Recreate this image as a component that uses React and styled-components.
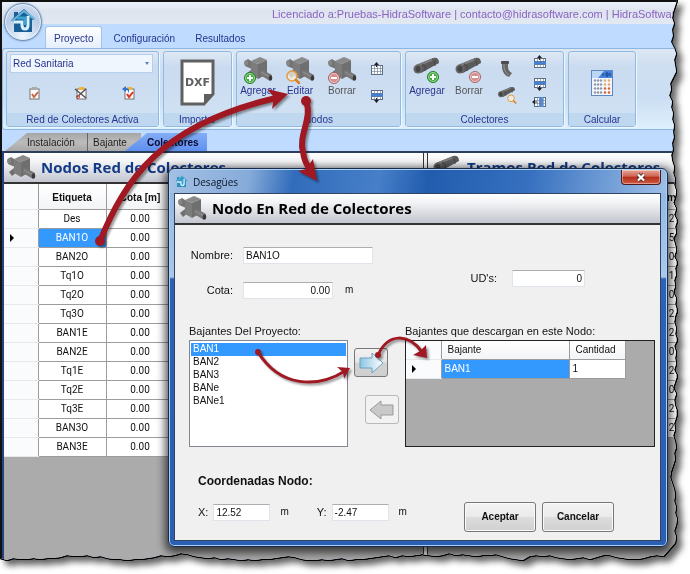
import React from 'react';
import styled, { createGlobalStyle, css } from 'styled-components';

const sans = '"Liberation Sans", Arial, sans-serif';
const heading = '"Open Sans", "Noto Sans", sans-serif';
const grid = 'Roboto, "Liberation Sans", sans-serif';

const GlobalStyle = createGlobalStyle`
  * {
    box-sizing: border-box;
  }

  body {
    margin: 0;
    background: #fff;
    font: 10px/12px ${sans};
    color: #111;
  }

  button, input, select {
    font: inherit;
    color: inherit;
    margin: 0;
  }
`;

/* Torn paper edge: insets from the right side and from the bottom side */
const rightTear = [
  0, 2, 4, 5, 3, 5, 4, 6, 3, 1, 3, 2, 1, 4, 7, 6, 8, 5, 6, 4, 5, 3, 4, 3, 5, 4,
  6, 5, 3, 4, 2, 3, 1, 2, 4, 1, 3, 0, 2, 1, 4, 2, 1, 3, 0, 2, 1, 3, 2, 4, 1, 2,
  0, 2, 3, 1, 2, 0, 3, 1, 2, 1, 3, 0, 2, 4, 1, 3, 2, 0, 1, 3, 2, 4, 2, 1, 3, 2,
  4, 6, 7, 5, 3, 2, 3, 1, 2, 0, 1, 3, 1, 2,
];
const bottomTear = [
  2, 0, 2, 1, 1, 2, 1, 2, 2, 3, 5, 4, 4, 5, 3, 4, 2, 1, 1, 0, 1, 1, 2, 3, 5, 4,
  5, 7, 6, 4, 3, 2, 3, 1, 2, 1, 0, 1, 0, 1, 1, 2, 3, 4, 3, 1, 0, 0, 1, 0, 1, 2,
  0, 1, 1, 2, 3, 4, 5, 3, 5, 4, 5, 6, 5, 4, 5, 7, 5, 6, 5, 4, 5, 5, 6, 4, 2, 1,
  0, 4, 5, 4, 5, 3, 2, 1, 2, 3, 1, 3, 5, 5, 3, 2, 1, 1, 2, 4, 5, 4,
];

const tornShape = [
  '0 0',
  ...rightTear.map(
    (inset, i) => `calc(100% - ${inset}px) ${(i * 98) / rightTear.length}%`
  ),
  ...bottomTear
    .map((inset, i) => `${(i * 99) / bottomTear.length}% calc(100% - ${inset}px)`)
    .reverse(),
].join(', ');

const Page = styled.div`
  position: relative;
  display: flex;
  min-height: 100vh;
  padding: 0 13px 14px 0;
  filter: drop-shadow(1px 0 0 #000) drop-shadow(0 1px 0 #000)
    drop-shadow(5px 5px 3px rgba(0, 0, 0, 0.6));
`;

const AppWindow = styled.main`
  position: relative;
  display: flex;
  flex: 1;
  flex-direction: column;
  min-width: 0;
  border-top: 2px solid #111;
  border-left: 2px solid #111;
  background: #bfdbff;
  clip-path: polygon(${tornShape});
`;

/* ---------- title and ribbon ---------- */

const TitleBar = styled.header`
  display: flex;
  align-items: center;
  height: 22px;
  padding-left: 270px;
  background: linear-gradient(#eaf1fa, #dde4ee 40%, #e3e9f2);
  color: #8a62c4;
  font-size: 11px;
  white-space: nowrap;
`;

const TitleText = styled.span`
  flex: 1;
  padding-top: 1px;
`;

const Orb = styled.button`
  position: absolute;
  top: 1px;
  left: 2px;
  width: 38px;
  height: 38px;
  padding: 0;
  border: 1px solid #6f8fb8;
  border-radius: 50%;
  background: radial-gradient(circle at 50% 90%, #eef7ff, #b8cce6 55%, #d5e2f2);
  box-shadow: inset 0 0 0 1px #e9f2fc, 0 0 2px #5f7fa8;
`;

const RibbonTabs = styled.nav`
  display: flex;
  align-items: flex-end;
  height: 24px;
  padding-left: 43px;
`;

const RibbonTab = styled.a`
  height: 22px;
  margin-right: 2px;
  padding: 6px 8px 0;
  border: 1px solid transparent;
  border-bottom: 0;
  border-radius: 3px 3px 0 0;
  color: #26348f;
  text-decoration: none;

  ${({ $active }) =>
    $active &&
    css`
      border-color: #9dc3ee;
      background: linear-gradient(#fff, #e5eefb);
    `}
`;

const Ribbon = styled.section`
  display: flex;
  gap: 4px;
  height: 82px;
  padding: 2px 3px;
  border: 1px solid #8db5e2;
  border-right: 0;
  border-radius: 3px 0 0 3px;
  background: linear-gradient(#dee8f5, #cfdff1 20%, #cbdef3 60%, #def0fd);
`;

const Group = styled.section`
  display: flex;
  flex: 0 0 ${({ $width }) => $width}px;
  flex-direction: column;
  border: 1px solid #90badf;
  border-radius: 3px;
  background: linear-gradient(#dfe8f4, #cadbf0 20%, #d2e2f4);
  box-shadow: 1px 1px 0 #eef6ff;
`;

const GroupBody = styled.div`
  display: flex;
  flex: 1;
  justify-content: ${({ $center }) => ($center ? 'center' : 'flex-start')};
  align-items: ${({ $center }) => ($center ? 'center' : 'stretch')};
`;

const GroupName = styled.h2`
  height: 13px;
  margin: 0;
  background: #bfd8f0;
  color: #26348f;
  font-size: 10px;
  font-weight: 400;
  line-height: 13px;
  text-align: center;
`;

const NetworkTools = styled.div`
  display: flex;
  flex: 1;
  flex-direction: column;
  padding: 2px 5px 0 3px;
`;

const NetworkSelect = styled.div`
  position: relative;

  select {
    width: 100%;
    height: 19px;
    padding: 0 2px;
    border: 1px solid #b7cfee;
    border-radius: 0;
    background: #f0f6fe;
    color: #26348f;
    appearance: none;
  }

  &::after {
    content: '';
    position: absolute;
    top: 8px;
    right: 4px;
    border: 2px solid transparent;
    border-top: 3px solid #5b7fb8;
    pointer-events: none;
  }
`;

const IconRow = styled.div`
  display: flex;
  flex: 1;
  justify-content: space-around;
  align-items: center;
`;

const ToolButton = styled.button`
  display: flex;
  flex-direction: column;
  align-items: center;
  justify-content: center;
  padding: 0;
  border: 0;
  background: none;
`;

const BigButton = styled(ToolButton)`
  justify-content: flex-start;
  width: 42px;
  padding-top: 3px;
  color: ${({ $muted }) => ($muted ? '#555' : '#26348f')};
`;

const ToolStack = styled.div`
  display: flex;
  flex-direction: column;
  justify-content: space-evenly;
  align-items: center;
  width: ${({ $width }) => $width || 33}px;
`;

/* ---------- document area ---------- */

const DocTabs = styled.nav`
  display: flex;
  align-items: flex-end;
  height: 21px;
  padding-left: 3px;
`;

const DocTab = styled.a`
  height: 18px;
  padding: 4px 0 0 ${({ $pad }) => $pad}px;
  width: ${({ $width }) => $width}px;
  background: linear-gradient(#a5a5a5, #bcbcbc 50%, #a8a8a8);
  color: #222;
  text-decoration: none;

  ${({ $slanted }) =>
    $slanted &&
    css`
      clip-path: polygon(22px 0, 100% 0, 100% 100%, 0 100%);
    `}

  ${({ $divider }) =>
    $divider &&
    css`
      border-left: 1px solid #666;
    `}

  ${({ $active }) =>
    $active &&
    css`
      margin-left: -16px;
      background: linear-gradient(#84adf5, #5f90ef);
      color: #0a0a30;
      font-weight: 700;
    `}
`;

const Workspace = styled.div`
  display: grid;
  flex: 1;
  grid-template-columns: minmax(0, 1fr) 5px 249px;
  border-top: 2px solid #2d3e5c;
  border-left: 2px solid #24427f;
  background: #ababab;
`;

const Splitter = styled.div`
  border: solid #333;
  border-width: 0 1px;
  background: #f4f4f4;
`;

const Panel = styled.section`
  min-width: 0;
  overflow: hidden;
`;

const Banner = styled.header`
  display: flex;
  align-items: center;
  gap: 5px;
  height: 31px;
  padding-left: ${({ $indent }) => $indent || 2}px;
  border-bottom: 2px solid #333;
  background: linear-gradient(#fff, #f2f3f5 30%, #c3c6d0);
  color: ${({ $color }) => $color || '#000'};

  h1 {
    margin: 0;
    padding-bottom: 2px;
    font: 700 15px/22px ${heading};
    white-space: nowrap;
  }
`;

const DataTable = styled.table`
  width: ${({ $width }) => $width || 'auto'};
  border-collapse: collapse;
  table-layout: fixed;
  background: #fff;
  font-family: ${grid};
  text-align: center;

  th,
  td {
    height: 19px;
    padding: 0;
    border: 1px solid #9c9c9c;
    border-width: 0 1px 1px 0;
    overflow: hidden;
  }

  thead th {
    height: 25px;
    padding-top: 3px;
    font-family: ${sans};
    background: linear-gradient(#fff, #f3f4f6);
  }

  th:first-child {
    border-bottom-color: #e6e8ec;
    background: #fafbfd;
  }
`;

const SelectedCell = styled.td`
  background: #3399ff;
  color: #fff;
`;

const RowMarker = styled.span`
  display: block;
  width: 0;
  margin-left: ${({ $inset }) => $inset}px;
  border: 4px solid transparent;
  border-left-color: #000;
  border-right-width: 0;
`;

/* ---------- dialog ---------- */

const Dialog = styled.form`
  position: absolute;
  top: 166px;
  left: 166px;
  right: 9px;
  padding: 0 6px 5px 5px;
  border: 1px solid #1b2c4a;
  border-radius: 6px;
  background: linear-gradient(#8fb4e2, #a9c8ee 108px, #2c63b7 110px, #2a5fb3);
  box-shadow: inset 0 0 0 1px #a9d0f5, 0 3px 9px 3px rgba(0, 0, 0, 0.65);
`;

const DialogTitle = styled.header`
  display: flex;
  align-items: center;
  gap: 5px;
  height: 23px;
  margin: 1px -5px 0 -4px;
  padding-left: 5px;
  border-radius: 5px 5px 0 0;
  background: linear-gradient(
    100deg,
    #a3c0e4,
    #86abd9 16%,
    #316cbb 25%,
    #477fc8 42%,
    #215cae 52%,
    #3670bf 72%,
    #9dbfe8
  );
  color: #0a1526;
  font: 10px/14px ${heading};
`;

const CloseButton = styled.button`
  align-self: flex-start;
  display: flex;
  align-items: center;
  justify-content: center;
  width: 40px;
  height: 15px;
  margin: 0 5px 0 auto;
  padding: 0;
  border: 1px solid #4d1a1a;
  border-top: 0;
  border-radius: 0 0 4px 4px;
  background: linear-gradient(#e2a699, #cf6452 45%, #b32c18 50%, #cf5a42);
  box-shadow: inset 0 0 0 1px rgba(255, 255, 255, 0.4);
`;

const Client = styled.div`
  border: 1px solid #31435f;
  background: #f0f0f0;
`;

const DialogBody = styled.div`
  padding: 21px 5px 8px 14px;
`;

const Columns = styled.div`
  display: flex;
  justify-content: space-between;
`;

const Fields = styled.div`
  display: grid;
  grid-template-columns: 44px auto;
  gap: 17px 10px;
`;

const Field = styled.div`
  display: flex;
  align-items: center;
  gap: 12px;
`;

const UnitsField = styled(Field)`
  align-self: flex-end;
  gap: 15px;
  margin: 0 70px 12px 0;
`;

const Label = styled.label`
  font-size: 11px;
  line-height: 18px;
  white-space: nowrap;
  text-align: ${({ $end }) => ($end ? 'right' : 'left')};
`;

const TextBox = styled.input`
  width: ${({ $width }) => $width}px;
  height: 17px;
  padding: 0 2px;
  border: 1px solid #dfe4ea;
  border-top-color: #abadb3;
  background: #fff;
  text-align: ${({ $end }) => ($end ? 'right' : 'left')};
`;

const Transfer = styled.div`
  display: grid;
  grid-template-columns: 159px 57px minmax(0, 1fr);
  margin-top: 23px;
`;

const ListBox = styled.select`
  display: block;
  width: 100%;
  height: 107px;
  padding: 2px 1px;
  border: 1px solid #828790;
  border-radius: 0;
  background: #fff;
  outline: 0;
  overflow: hidden;

  option {
    min-height: 13px;
    padding: 0 2px;
    line-height: 13px;
  }

  option:checked {
    background: linear-gradient(#3399ff, #3399ff);
    -webkit-text-fill-color: #fff;
  }
`;

const Arrows = styled.div`
  display: flex;
  flex-direction: column;
  gap: 18px;
  padding: 26px 6px 0;
`;

const ArrowButton = styled.button`
  display: flex;
  align-items: center;
  justify-content: center;
  align-self: ${({ $end }) => ($end ? 'flex-end' : 'flex-start')};
  width: 34px;
  height: 29px;
  padding: 0;
  border: 1px solid ${({ $end }) => ($end ? '#b9b9b9' : '#777')};
  border-radius: 3px;
  background: ${({ $end }) =>
    $end ? '#f2f2f2' : 'linear-gradient(#f2f2f2, #e6e6e6 48%, #d2d2d2 52%, #cfcfcf)'};
`;

const GridFrame = styled.div`
  height: 107px;
  border: 1px solid #222;
  background: #ababab;
`;

const InnerTable = styled(DataTable)`
  font-family: ${sans};
  text-align: left;

  th,
  td {
    padding-left: 3px;
  }

  thead th {
    height: 18px;
    padding: 0 0 0 6px;
    font-weight: 400;
  }

  tbody th {
    padding-left: 0;
  }
`;

const Footer = styled.div`
  display: flex;
  justify-content: space-between;
  padding: 27px 41px 0 9px;
`;

const Coordinates = styled.fieldset`
  margin: 0;
  padding: 0 0 11px;
  border: 0;

  legend {
    padding: 0;
    margin-bottom: 15px;
    font-size: 12px;
    font-weight: 700;
    line-height: 14px;
  }
`;

const CoordinateRow = styled.div`
  display: flex;
  gap: 28px;
`;

const Coordinate = styled(Field)`
  gap: 5px;

  span {
    padding-left: 5px;
  }
`;

const Actions = styled.div`
  display: flex;
  align-items: flex-end;
  gap: 6px;
`;

const ActionButton = styled.button`
  width: 72px;
  height: 30px;
  padding: 0;
  border: 1px solid #777;
  border-radius: 3px;
  background: linear-gradient(#f3f3f3, #ebebeb 48%, #dcdcdc 52%, #d0d0d0);
  box-shadow: inset 0 0 0 1px #fafafa;
  font-weight: 700;
`;

const Callouts = styled.svg`
  position: absolute;
  top: 0;
  left: 0;
  pointer-events: none;
  filter: drop-shadow(2px 2px 1px rgba(0, 0, 0, 0.4));
`;

/* ---------- icons ---------- */

const HouseIcon = ({ size = 26, plain }) => (
  <svg width={size} height={size} viewBox="0 0 26 26">
    <path
      d="M1 13 L4 9 V4 H8 V6 L14 1 L25 11 L22 12 V24 H4 V13 Z"
      fill={plain ? '#2d8fc0' : '#1a5f96'}
    />
    <path d="M2 13 L14 3 L24 11" fill="none" stroke="#69b9de" strokeWidth="2" />
    <path
      d="M4 14 H12 V17 Q12 21 15 21 Q18 21 18 17 V8"
      fill="none"
      stroke="#d9f1fb"
      strokeWidth="3"
    />
    <path d="M7 10 H15 V17" fill="none" stroke="#3fa3cf" strokeWidth="3" />
  </svg>
);

const Badge = ({ kind, x, y }) => {
  if (kind === 'find') {
    return (
      <g transform={`translate(${x} ${y - 2})`} fill="none">
        <circle r="5" fill="#f6efe0" fillOpacity=".75" stroke="#e79b3a" strokeWidth="1.5" />
        <path d="M4 4 L7 7" stroke="#d98324" strokeWidth="2.5" strokeLinecap="round" />
      </g>
    );
  }
  const add = kind === 'add';
  return (
    <g transform={`translate(${x} ${y})`}>
      <circle r="5.5" fill={add ? '#3fae3a' : '#d49090'} stroke={add ? '#237e25' : '#a86464'} />
      <circle r="4.5" fill="none" stroke="#fff" strokeOpacity=".5" />
      <path d={add ? 'M-3 0 H3 M0 -3 V3' : 'M-3 0 H3'} stroke="#fff" strokeWidth="2" />
    </g>
  );
};

const NodeIcon = ({ badge, size = 30 }) => (
  <svg width={size} height={size} viewBox="0 0 30 30">
    <path d="M2 6 L5 4 L11 8 V14 L9 14 L2 11 Z" fill="#747474" />
    <ellipse cx="3" cy="8" rx="2" ry="2.800" fill="#868686" />
    <path d="M3 19 L8 15 L11 19 L6 23 Z" fill="#707070" />
    <path d="M8 6 L17 2 L24 5 L15 9 Z" fill="#8a8a8a" />
    <path d="M8 6 L15 9 V24 L8 20 Z" fill="#7c7c7c" />
    <path d="M15 9 L24 5 V19 L15 24 Z" fill="#6f6f6f" />
    <path d="M17 16 L20 15 L29 20 L27 26 L17 20 Z" fill="#777" />
    <path d="M18 17 L27 22" stroke="#949494" />
    <ellipse cx="27.500" cy="23" rx="1.800" ry="2.800" fill="#3a3a3a" />
    {badge && <Badge kind={badge} x={7} y={23} />}
  </svg>
);

const PipeIcon = ({ badge, size = 30 }) => (
  <svg width={size} height={size} viewBox="0 0 30 30">
    <path d="M4 10 L21 3 Q27 2 27 8 L9 18 Z" fill="#5a5a5a" />
    <path d="M7 10 L22 4" stroke="#7d7d7d" strokeWidth="2" />
    <path d="M10 9 Q14 10 13 16 M20 4 Q23 5 23 11" stroke="#454545" fill="none" />
    <ellipse cx="6" cy="14" rx="4.500" ry="4.500" fill="#666" />
    <ellipse cx="6" cy="14" rx="2.500" ry="3" fill="#454545" />
    {badge && <Badge kind={badge} x={21} y={22} />}
  </svg>
);

const ElbowIcon = () => (
  <svg width="16" height="18" viewBox="0 0 16 18">
    <path d="M3 2 V8 Q4 15 10 17 L13 13 Q9 11 9 7 V2 Z" fill="#666" />
    <path d="M5 4 V8 Q6 13 10 15" fill="none" stroke="#949494" />
    <rect x="2" y="1" width="8" height="3" rx="1" fill="#4b4b4b" />
  </svg>
);

const DxfIcon = () => (
  <svg width="36" height="48" viewBox="0 0 36 48" role="img" aria-label="DXF">
    <path d="M2 2 H33 V35 L24 45 H2 Z" fill="#fff" stroke="#606060" strokeWidth="3" />
    <path d="M24 46 V35 H34 Z" fill="#606060" />
    <text
      x="17.500"
      y="27"
      textAnchor="middle"
      fontFamily="DejaVu Sans, sans-serif"
      fontWeight="700"
      fontSize="11"
      fill="#606060"
    >
      DXF
    </text>
  </svg>
);

const ClipIcon = ({ variant }) => (
  <svg width="14" height="14" viewBox="0 0 14 14">
    <rect x="3" y="3" width="9" height="10" fill="#fbfbfb" stroke="#77716a" />
    <rect x="5" y="1" width="5" height="3" fill={variant ? '#f0b437' : '#aaa'} />
    {variant === 'cut' ? (
      <path d="M1 3 L12 12 M3 11 L12 3" stroke="#555" strokeWidth="1.500" />
    ) : (
      <path
        d="M5 8 L7 11 L11 6"
        fill="none"
        stroke={variant ? '#e0321d' : '#c66a4d'}
        strokeWidth="2"
      />
    )}
    {variant === 'cut' && <circle cx="4" cy="11" r="1.500" fill="none" stroke="#c2493a" />}
    {variant === 'undo' && (
      <path d="M4 0 L0 3 L4 6 V4 Q7 4 6 8 Q9 2 4 2 Z" fill="#2b71d6" />
    )}
  </svg>
);

const rowIconArrows = {
  up: 'M7.500 0 L10 3 H8 V5 H7 V3 H5 Z',
  down: 'M7.500 16 L10 13 H8 V11 H7 V13 H5 Z',
  left: 'M0 8 L3 5.500 V7.500 H5 V8.500 H3 V10.500 Z',
};

const RowIcon = ({ to, band }) => (
  <svg width="15" height="16" viewBox="0 0 15 16">
    <rect x="2.500" y="3.500" width="11" height="9" fill="#fff" stroke="#5b6b84" />
    {band === 'row' && <rect x="2" y="6" width="12" height="4" fill="#3d83e6" />}
    {band === 'column' && <rect x="7" y="3" width="4" height="10" fill="#4f91ea" />}
    <path d="M2 6.500 H14 M2 9.500 H14 M5.500 3 V13 M8.500 3 V13 M11.500 3 V13" stroke="#68788f" strokeWidth=".6" />
    <path d={rowIconArrows[to]} fill="#222" />
  </svg>
);

const CalculatorIcon = () => (
  <svg width="22" height="26" viewBox="0 0 22 26">
    <rect x=".5" y=".5" width="21" height="25" fill="#f2f6fc" stroke="#6088c4" />
    <rect x="1" y="1" width="20" height="7" fill="#4583dc" />
    <path d="M1 1 H13 L7 8 H1 Z" fill="#bcd6f8" />
    <path d="M12 6 V3 M15 3 H17 V6 H15 Z M19 3 V6" stroke="#163f86" fill="none" />
    {[11, 15, 19, 23].map(y =>
      [4, 7, 10, 14, 18].map(x => (
        <circle key={`${x}-${y}`} cx={x} cy={y - 0.5} r="1.200" fill={x > 12 ? (y > 15 ? '#d9622b' : '#eda764') : '#8d99aa'} />
      ))
    )}
  </svg>
);

const ArrowIcon = ({ back }) => (
  <svg width="26" height="22" viewBox="0 0 26 22">
    <defs>
      <linearGradient id="water" x2="1">
        <stop stopColor="#8cc6e4" />
        <stop offset="1" stopColor="#fff" />
      </linearGradient>
    </defs>
    <path
      d={back ? 'M1 11 L12 2 V6 H24 V16 H12 V20 Z' : 'M25 11 L14 1 V6 H2 V16 H14 V21 Z'}
      fill={back ? '#c9c9c9' : 'url(#water)'}
      stroke={back ? '#999' : '#6ba0bf'}
    />
  </svg>
);

/* ---------- data ---------- */

const nodes = [
  'Des', 'BAN1O', 'BAN2O', 'Tq1O', 'Tq2O', 'Tq3O', 'BAN1E',
  'BAN2E', 'Tq1E', 'Tq2E', 'Tq3E', 'BAN3O', 'BAN3E',
];

const lengths = [2, 5, 0, 1, 0, 2, 2, 0, 2, 0, 2, 2];

const stacks = ['BAN1', 'BAN2', 'BAN3', 'BANe', 'BANe1'];

/* ---------- sections ---------- */

const RibbonBar = () => (
  <Ribbon>
    <Group $width={153}>
      <NetworkTools>
        <NetworkSelect>
          <select aria-label="Red activa">
            <option>Red Sanitaria</option>
          </select>
        </NetworkSelect>
        <IconRow>
          <ToolButton type="button" aria-label="Validar"><ClipIcon /></ToolButton>
          <ToolButton type="button" aria-label="Quitar"><ClipIcon variant="cut" /></ToolButton>
          <ToolButton type="button" aria-label="Restaurar"><ClipIcon variant="undo" /></ToolButton>
        </IconRow>
      </NetworkTools>
      <GroupName>Red de Colectores Activa</GroupName>
    </Group>

    <Group $width={69}>
      <GroupBody $center>
        <ToolButton type="button"><DxfIcon /></ToolButton>
      </GroupBody>
      <GroupName>Importar</GroupName>
    </Group>

    <Group $width={165}>
      <GroupBody>
        <BigButton type="button"><NodeIcon badge="add" />Agregar</BigButton>
        <BigButton type="button"><NodeIcon badge="find" />Editar</BigButton>
        <BigButton type="button" $muted><NodeIcon badge="remove" />Borrar</BigButton>
        <ToolStack $width={27}>
          <ToolButton type="button" aria-label="Fila arriba"><RowIcon to="up" /></ToolButton>
          <ToolButton type="button" aria-label="Fila abajo"><RowIcon to="down" band="row" /></ToolButton>
        </ToolStack>
      </GroupBody>
      <GroupName>Nodos</GroupName>
    </Group>

    <Group $width={159}>
      <GroupBody>
        <BigButton type="button"><PipeIcon badge="add" />Agregar</BigButton>
        <BigButton type="button" $muted><PipeIcon badge="remove" />Borrar</BigButton>
        <ToolStack>
          <ToolButton type="button" aria-label="Codo"><ElbowIcon /></ToolButton>
          <ToolButton type="button" aria-label="Editar tramo"><PipeIcon badge="find" size={20} /></ToolButton>
        </ToolStack>
        <ToolStack>
          <ToolButton type="button" aria-label="Insertar arriba"><RowIcon to="up" band="row" /></ToolButton>
          <ToolButton type="button" aria-label="Insertar abajo"><RowIcon to="down" band="row" /></ToolButton>
          <ToolButton type="button" aria-label="Insertar columna"><RowIcon to="left" band="column" /></ToolButton>
        </ToolStack>
      </GroupBody>
      <GroupName>Colectores</GroupName>
    </Group>

    <Group $width={68}>
      <GroupBody $center>
        <ToolButton type="button" aria-label="Calcular"><CalculatorIcon /></ToolButton>
      </GroupBody>
      <GroupName>Calcular</GroupName>
    </Group>
  </Ribbon>
);

const NodesPanel = () => (
  <Panel>
    <Banner $color="#123a86">
      <NodeIcon />
      <h1>Nodos Red de Colectores</h1>
    </Banner>
    <DataTable $width="170px">
      <colgroup>
        <col width="34" />
        <col width="68" />
        <col width="68" />
      </colgroup>
      <thead>
        <tr>
          <th aria-label="Fila" />
          <th>Etiqueta</th>
          <th>Cota [m]</th>
        </tr>
      </thead>
      <tbody>
        {nodes.map(name => {
          const selected = name === 'BAN1O';
          const Cell = selected ? SelectedCell : 'td';
          return (
            <tr key={name}>
              <th>{selected && <RowMarker $inset={6} />}</th>
              <Cell>{name}</Cell>
              <td>0.00</td>
            </tr>
          );
        })}
      </tbody>
    </DataTable>
  </Panel>
);

const SectionsPanel = () => (
  <Panel>
    <Banner $color="#123a86" $indent={4}>
      <PipeIcon />
      <h1>Tramos Red de Colectores</h1>
    </Banner>
    <DataTable $width="100%">
      <colgroup>
        <col width="34" />
        <col />
        <col width="10" />
      </colgroup>
      <thead>
        <tr>
          <th aria-label="Fila" />
          <th />
          <th>m</th>
        </tr>
      </thead>
      <tbody>
        {lengths.map((length, i) => (
          <tr key={i}>
            <th />
            <td />
            <td>{length}</td>
          </tr>
        ))}
      </tbody>
    </DataTable>
  </Panel>
);

const NodeDialog = () => (
  <Dialog onSubmit={e => e.preventDefault()}>
    <DialogTitle>
      <HouseIcon size={13} plain />
      Desagües
      <CloseButton type="button" aria-label="Cerrar">
        <svg width="10" height="9" viewBox="0 0 10 9">
          <path d="M2 1.500 L8 7.500 M8 1.500 L2 7.500" stroke="#53302c" strokeWidth="4" />
          <path d="M2 1.500 L8 7.500 M8 1.500 L2 7.500" stroke="#fff" strokeWidth="2.200" />
        </svg>
      </CloseButton>
    </DialogTitle>
    <Client>
      <Banner>
        <NodeIcon />
        <h1>Nodo En Red de Colectores</h1>
      </Banner>
      <DialogBody>
        <Columns>
          <Fields>
            <Label htmlFor="nombre" $end>Nombre:</Label>
            <Field>
              <TextBox id="nombre" $width={130} defaultValue="BAN1O" />
            </Field>
            <Label htmlFor="cota" $end>Cota:</Label>
            <Field>
              <TextBox id="cota" $width={90} $end defaultValue="0.00" />
              <span>m</span>
            </Field>
          </Fields>
          <UnitsField>
            <Label htmlFor="uds">UD's:</Label>
            <TextBox id="uds" $width={73} $end defaultValue="0" />
          </UnitsField>
        </Columns>

        <Transfer>
          <div>
            <Label htmlFor="proyecto">Bajantes Del Proyecto:</Label>
            <ListBox id="proyecto" size={8} defaultValue="BAN1">
              {stacks.map(name => (
                <option key={name}>{name}</option>
              ))}
            </ListBox>
          </div>
          <Arrows>
            <ArrowButton type="button" aria-label="Agregar bajante"><ArrowIcon /></ArrowButton>
            <ArrowButton type="button" aria-label="Quitar bajante" $end><ArrowIcon back /></ArrowButton>
          </Arrows>
          <div>
            <Label as="div" id="descargan">Bajantes que descargan en este Nodo:</Label>
            <GridFrame>
              <InnerTable $width="219px" aria-labelledby="descargan">
                <colgroup>
                  <col width="35" />
                  <col width="128" />
                  <col width="56" />
                </colgroup>
                <thead>
                  <tr>
                    <th aria-label="Fila" />
                    <th>Bajante</th>
                    <th>Cantidad</th>
                  </tr>
                </thead>
                <tbody>
                  <tr>
                    <th><RowMarker $inset={6} /></th>
                    <SelectedCell>BAN1</SelectedCell>
                    <td>1</td>
                  </tr>
                </tbody>
              </InnerTable>
            </GridFrame>
          </div>
        </Transfer>

        <Footer>
          <Coordinates>
            <legend>Coordenadas Nodo:</legend>
            <CoordinateRow>
              <Coordinate>
                <Label htmlFor="x">X:</Label>
                <TextBox id="x" $width={57} defaultValue="12.52" />
                <span>m</span>
              </Coordinate>
              <Coordinate>
                <Label htmlFor="y">Y:</Label>
                <TextBox id="y" $width={57} defaultValue="-2.47" />
                <span>m</span>
              </Coordinate>
            </CoordinateRow>
          </Coordinates>
          <Actions>
            <ActionButton type="submit">Aceptar</ActionButton>
            <ActionButton type="button">Cancelar</ActionButton>
          </Actions>
        </Footer>
      </DialogBody>
    </Client>
  </Dialog>
);

const CalloutArrows = () => (
  <Callouts width="450" height="400" viewBox="0 0 450 400" fill="none" stroke="#a01822">
    <g strokeWidth="6">
      <path d="M100 241 C125 180 160 125 276 98" />
      <path d="M306 101 C313 118 298 135 303 152 C304 160 307 166 311 171" />
    </g>
    <g strokeWidth="3">
      <path d="M258 352 C280 388 318 388 345 371" />
      <path d="M378 355 C388 333 408 333 422 352" />
    </g>
    <g fill="#a01822" stroke="none">
      <circle cx="100" cy="241" r="5" />
      <circle cx="306" cy="101" r="5" />
      <circle cx="258" cy="352" r="3" />
      <circle cx="378" cy="355" r="3" />
      <path d="M288 94 L267 89 L274 97 L272 109 Z" />
      <path d="M317 181 L298 171 L306 169 L313 159 Z" />
      <path d="M350 368 L337 367 L343 372 L344 379 Z" />
      <path d="M427 358 L413 355 L420 351 L426 345 Z" />
    </g>
  </Callouts>
);

export default function App() {
  return (
    <>
      <GlobalStyle />
      <Page>
        <AppWindow>
          <TitleBar>
            <TitleText>
              Licenciado a:Pruebas-HidraSoftware | contacto@hidrasoftware.com | HidraSoftware
            </TitleText>
          </TitleBar>
          <Orb type="button" aria-label="Menú"><HouseIcon /></Orb>
          <RibbonTabs>
            <RibbonTab href="#proyecto" $active>Proyecto</RibbonTab>
            <RibbonTab href="#configuracion">Configuración</RibbonTab>
            <RibbonTab href="#resultados">Resultados</RibbonTab>
          </RibbonTabs>
          <RibbonBar />
          <DocTabs>
            <DocTab href="#instalacion" $slanted $width={82} $pad={22}>Instalación</DocTab>
            <DocTab href="#bajante" $divider $width={54} $pad={5}>Bajante</DocTab>
            <DocTab href="#colectores" $slanted $active $width={82} $pad={22}>Colectores</DocTab>
          </DocTabs>
          <Workspace>
            <NodesPanel />
            <Splitter />
            <SectionsPanel />
          </Workspace>
          <NodeDialog />
        </AppWindow>
        <CalloutArrows />
      </Page>
    </>
  );
}
